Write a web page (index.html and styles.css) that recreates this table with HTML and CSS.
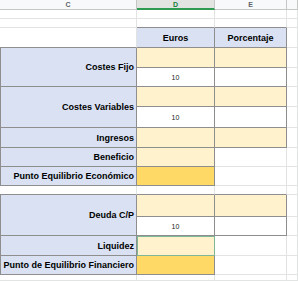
FILE: index.html
```html
<!DOCTYPE html>
<html lang="es">
<head>
<meta charset="utf-8">
<link rel="stylesheet" href="styles.css">
</head>
<body>
<div class="sheet">
  <div class="hd">C</div><div class="hd hd-sel">D</div><div class="hd">E</div><div class="hd"></div>

  <div class="c"></div><div class="c"></div><div class="c"></div><div class="c"></div>
  <div class="c"></div><div class="c tb"></div><div class="c tb"></div><div class="c"></div>

  <div class="c tb"></div><div class="t blue ctr">Euros</div><div class="t blue ctr">Porcentaje</div><div class="c lb"></div>

  <div class="t blue lbl span2">Costes Fijo</div><div class="t yl"></div><div class="t yl"></div><div class="c lb"></div>
  <div class="t wh num">10</div><div class="t wh"></div><div class="c lb"></div>

  <div class="t blue lbl span2">Costes Variables</div><div class="t yl"></div><div class="t yl"></div><div class="c lb"></div>
  <div class="t wh num">10</div><div class="t wh"></div><div class="c lb"></div>

  <div class="t blue lbl">Ingresos</div><div class="t yl"></div><div class="t yl"></div><div class="c lb"></div>
  <div class="t blue lbl">Beneficio</div><div class="t yl"></div><div class="c"></div><div class="c"></div>
  <div class="t blue lbl">Punto Equilibrio Económico</div><div class="t dy"></div><div class="c"></div><div class="c"></div>

  <div class="c tb"></div><div class="c tb"></div><div class="c tb"></div><div class="c"></div>

  <div class="t blue lbl span2">Deuda C/P</div><div class="t yl"></div><div class="t yl"></div><div class="c lb"></div>
  <div class="t wh num">10</div><div class="t wh"></div><div class="c lb"></div>

  <div class="t blue lbl">Liquidez</div><div class="t yl sel"></div><div class="c"></div><div class="c"></div>
  <div class="t blue lbl">Punto de Equilibrio Financiero</div><div class="t dy"></div><div class="c"></div><div class="c"></div>

  <div class="c"></div><div class="c"></div><div class="c"></div><div class="c"></div>
</div>
</body>
</html>
```

FILE: styles.css
```css
html, body {
  margin: 0;
  padding: 0;
  background: #ffffff;
  overflow: hidden;
}

.sheet {
  display: grid;
  width: 298px;
  height: 281px;
  grid-template-columns: 137px 78px 72px 11px;
  grid-template-rows: 10px 9px 9px 20px 20px 19px 20px 21px 20px 19px 19px 9px 22px 19px 20px 19px 6px;
  font-family: "Liberation Sans", Arial, sans-serif;
}

.sheet > div {
  box-sizing: border-box;
  border-right: 1px solid #e2e3e3;
  border-bottom: 1px solid #e2e3e3;
  display: flex;
  align-items: center;
  min-width: 0;
  overflow: hidden;
  white-space: nowrap;
}

.hd {
  background: #f8f9fa;
  justify-content: center;
  font-size: 7px;
  color: #5f6368;
  font-weight: bold;
  border-right-color: #c4c7c5 !important;
  border-bottom-color: #c4c7c5 !important;
}

.hd-sel {
  background: #e1e4e1;
  color: #188038;
  border-bottom: 2px solid #2e9a52 !important;
}

.c.tb {
  border-bottom-color: #8e8e8e;
}

.c.lb {
  /* cell right of the table, left edge provided by table cell */
}

.t {
  border-right-color: #8e8e8e !important;
  border-bottom-color: #8e8e8e !important;
  font-size: 9px;
  color: #000;
}

.blue {
  background: #d9e1f3;
  font-weight: bold;
}

.sheet > .blue.lbl {
  border-left: 1px solid #8e8e8e;
  justify-content: flex-end;
  padding-right: 2px;
}

.ctr {
  justify-content: center;
}

.span2 {
  grid-row: span 2;
}

.yl {
  background: #fff2cc;
}

.dy {
  background: #ffd966;
}

.wh {
  background: #ffffff;
}

.num {
  justify-content: center;
  font-size: 7px;
  color: #222;
}

.sel {
  outline: 1px solid #7db795;
  outline-offset: -1px;
}
```
